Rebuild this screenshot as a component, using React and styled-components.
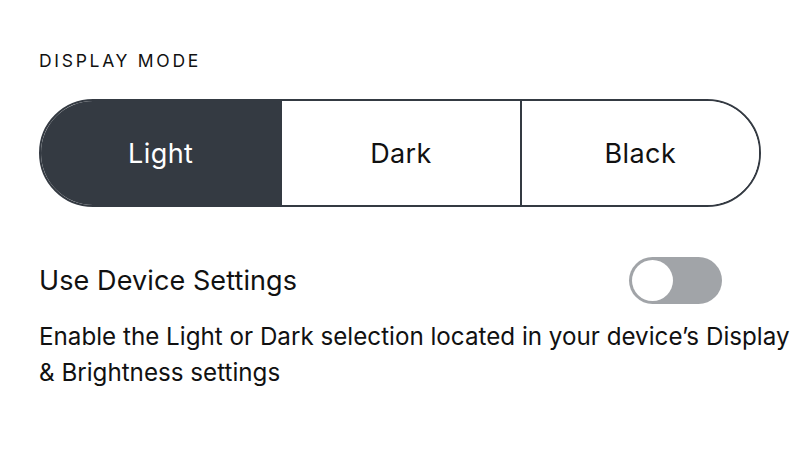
import styled, { createGlobalStyle } from "styled-components";
import { useState } from "react";

const GlobalStyle = createGlobalStyle`
  body {
    margin: 0;
    background: #fff;
    font-family: Inter, "Open Sans", sans-serif;
    font-weight: 400;
    color: #111;
  }
`;

const Page = styled.div`
  padding: 47px 10px 0 39px;
  width: 800px;
  height: 450px;
  box-sizing: border-box;
`;

const SectionLabel = styled.div`
  font-size: 17.5px;
  letter-spacing: 2.7px;
  line-height: 28px;
  text-transform: uppercase;
  color: #111;
`;

const Segmented = styled.div`
  margin-top: 24px;
  display: grid;
  grid-template-columns: repeat(3, 1fr);
  height: 108px;
  width: 722px;
  box-sizing: border-box;
  border: 2px solid #343a42;
  border-radius: 54px;
  overflow: hidden;
`;

const Segment = styled.button`
  border: none;
  border-left: ${(p) => (p.$first ? "none" : "2px solid #343a42")};
  background: ${(p) => (p.$active ? "#343a42" : "#fff")};
  color: ${(p) => (p.$active ? "#fff" : "#111")};
  font-family: inherit;
  font-size: 27px;
  letter-spacing: 0.4px;
  padding: 0;
  cursor: pointer;
`;

const Row = styled.div`
  margin-top: 50px;
  display: flex;
  align-items: center;
  justify-content: space-between;
  width: 683px;
`;

const RowTitle = styled.div`
  font-size: 27px;
  letter-spacing: 0.1px;
  line-height: 36px;
`;

const Switch = styled.button`
  width: 93px;
  height: 47px;
  border: none;
  border-radius: 24px;
  background: #a1a4a8;
  padding: 3px;
  display: flex;
  align-items: center;
  cursor: pointer;
`;

const Knob = styled.span`
  width: 41px;
  height: 41px;
  border-radius: 50%;
  background: #fff;
  margin-left: ${(p) => (p.$on ? "46px" : "0")};
`;

const Description = styled.p`
  margin: 15px 0 0;
  font-size: 24.2px;
  line-height: 36px;
`;

export default function App() {
  const [mode, setMode] = useState("Light");
  const [useDevice, setUseDevice] = useState(false);
  const modes = ["Light", "Dark", "Black"];

  return (
    <Page>
      <GlobalStyle />
      <SectionLabel>Display Mode</SectionLabel>
      <Segmented>
        {modes.map((m, i) => (
          <Segment key={m} $first={i === 0} $active={mode === m} onClick={() => setMode(m)}>
            {m}
          </Segment>
        ))}
      </Segmented>
      <Row>
        <RowTitle>Use Device Settings</RowTitle>
        <Switch onClick={() => setUseDevice((v) => !v)}>
          <Knob $on={useDevice} />
        </Switch>
      </Row>
      <Description>
        Enable the Light or Dark selection located in your device’s Display &amp; Brightness settings
      </Description>
    </Page>
  );
}
